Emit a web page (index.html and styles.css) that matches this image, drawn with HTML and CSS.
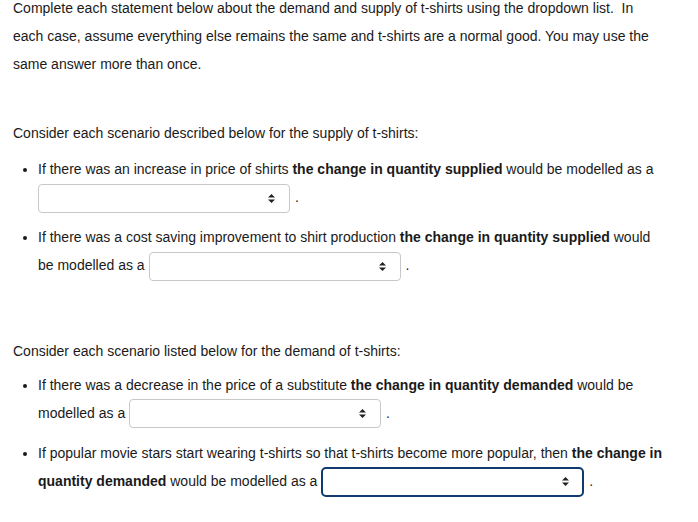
FILE: index.html
```html
<!DOCTYPE html>
<html>
<head>
<meta charset="utf-8">
<link rel="stylesheet" href="styles.css">
</head>
<body>
<div class="page">
  <p class="intro">Complete each statement below about the demand and supply of t-shirts using the dropdown list.&nbsp; In<br>each case, assume everything else remains the same and t-shirts are a normal good. You may use the<br>same answer more than once.</p>

  <p class="lead lead-first">Consider each scenario described below for the supply of t-shirts:</p>
  <ul class="items items-first">
    <li>If there was an increase in price of shirts <b>the change in quantity supplied</b> would be modelled as a<br><span class="sel"><svg class="arr" width="7" height="9" viewBox="0 0 7 9"><path d="M3.5 0 L7 3.5 L0 3.5 Z M3.5 9 L7 5.5 L0 5.5 Z" fill="#222"/></svg></span><span class="dot">.</span></li>
    <li>If there was a cost saving improvement to shirt production <b>the change in quantity supplied</b> would<br>be modelled as a <span class="sel"><svg class="arr" width="7" height="9" viewBox="0 0 7 9"><path d="M3.5 0 L7 3.5 L0 3.5 Z M3.5 9 L7 5.5 L0 5.5 Z" fill="#222"/></svg></span><span class="dot">.</span></li>
  </ul>

  <p class="lead lead-second">Consider each scenario listed below for the demand of t-shirts:</p>
  <ul class="items items-second">
    <li>If there was a decrease in the price of a substitute <b>the change in quantity demanded</b> would be<br>modelled as a <span class="sel"><svg class="arr" width="7" height="9" viewBox="0 0 7 9"><path d="M3.5 0 L7 3.5 L0 3.5 Z M3.5 9 L7 5.5 L0 5.5 Z" fill="#222"/></svg></span><span class="dot">.</span></li>
    <li>If popular movie stars start wearing t-shirts so that t-shirts become more popular, then <b>the change in<br>quantity demanded</b> would be modelled as a <span class="sel sel-focus"><svg class="arr" width="7" height="9" viewBox="0 0 7 9"><path d="M3.5 0 L7 3.5 L0 3.5 Z M3.5 9 L7 5.5 L0 5.5 Z" fill="#222"/></svg></span><span class="dot">.</span></li>
  </ul>
</div>
</body>
</html>
```

FILE: styles.css
```css
html, body {
  margin: 0;
  padding: 0;
  background: #ffffff;
}
body {
  font-family: "Liberation Sans", Arial, sans-serif;
  font-size: 14px;
  color: #1a1a1a;
}
.page {
  margin-top: -6px;
  padding-left: 13px;
  width: 680px;
}
.intro {
  margin: 0;
  line-height: 28px;
  white-space: nowrap;
}
.lead {
  margin: 0;
  line-height: 28px;
}
.lead-first {
  margin-top: 41px;
}
.lead-second {
  margin-top: 56px;
}
.items {
  margin: 0;
  padding-left: 25px;
  list-style: disc;
  white-space: nowrap;
}
.items-first {
  margin-top: 8px;
}
.items-first li {
  margin-bottom: 10px;
}
.items-second {
  margin-top: 6px;
}
.items-second li {
  margin-bottom: 11px;
}
.items li {
  line-height: 28px;
}
.items li b {
  font-weight: bold;
}
.sel {
  display: inline-flex;
  align-items: center;
  justify-content: flex-end;
  box-sizing: border-box;
  width: 252px;
  height: 29px;
  border: 1px solid #c8c8c8;
  border-radius: 4px;
  vertical-align: middle;
  padding-right: 14px;
  background: #fff;
}
.sel-focus {
  width: 263px;
  height: 30px;
  margin-top: -2px;
  border: 2px solid #0f3b6e;
  border-radius: 5px;
  padding-right: 13px;
}
.arr {
  display: block;
}
.dot {
  margin-left: 5px;
}
```
